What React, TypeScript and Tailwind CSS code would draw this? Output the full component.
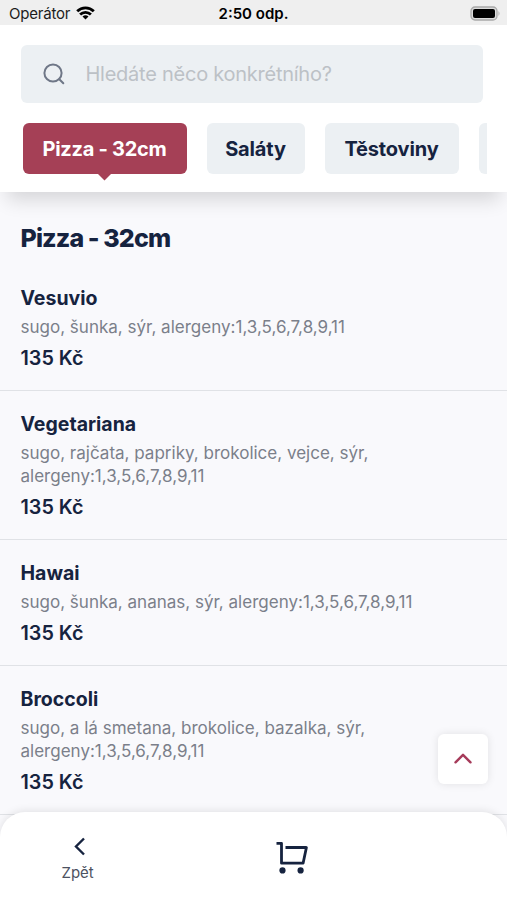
type Dish = { name: string; lines: string[]; price: string };

const dishes: Dish[] = [
  { name: 'Vesuvio', lines: ['sugo, šunka, sýr, alergeny:1,3,5,6,7,8,9,11'], price: '135 Kč' },
  { name: 'Vegetariana', lines: ['sugo, rajčata, papriky, brokolice, vejce, sýr,', 'alergeny:1,3,5,6,7,8,9,11'], price: '135 Kč' },
  { name: 'Hawai', lines: ['sugo, šunka, ananas, sýr, alergeny:1,3,5,6,7,8,9,11'], price: '135 Kč' },
  { name: 'Broccoli', lines: ['sugo, a lá smetana, brokolice, bazalka, sýr,', 'alergeny:1,3,5,6,7,8,9,11'], price: '135 Kč' },
];

function StatusBar() {
  return (
    <div className="grid h-[25px] grid-cols-3 items-center bg-[#efefef] pt-[3px] text-[15px] text-[#1c1c1c]">
      <div className="flex items-center gap-[6px] pl-[9px]">
        <span className="tracking-[-0.2px]">Operátor</span>
        <svg width="19" height="14" viewBox="0 0 19 14" className="mb-[3px]" fill="none" stroke="#000" strokeWidth="2.8">
          <path d="M1.2 5.2a11.8 11.8 0 0 1 16.6 0" />
          <path d="M4.1 8.5a7.7 7.7 0 0 1 10.8 0" />
          <path d="M9.5 13.6 6.5 10.6a4.3 4.3 0 0 1 6 0z" fill="#000" stroke="none" />
        </svg>
      </div>
      <span className="text-center font-semibold text-black">2:50 odp.</span>
      <div className="flex justify-end pr-[6px]">
        <svg width="31" height="15" viewBox="0 0 31 15" className="mb-[2px]">
          <rect x="1" y="1" width="26" height="13" rx="4" fill="#dcdcdc" stroke="#a9a9a9" strokeWidth="1.3" />
          <rect x="3" y="3" width="22" height="9" rx="2" fill="#000" />
          <path d="M28.5 5q2 2.5 0 5z" fill="#a9a9a9" />
        </svg>
      </div>
    </div>
  );
}

function DishRow({ dish }: { dish: Dish }) {
  return (
    <li className="border-b border-[#e0e2e6] pt-[19px] pr-5 pb-[18px] pl-[20.5px]">
      <h2 className="text-[19.5px] leading-7 font-bold text-[#16233f]">{dish.name}</h2>
      <p className="mt-[4.3px] text-[17.03px] leading-[23.4px] text-[#7b7f8a]">
        {dish.lines.map((line) => (
          <span key={line} className="block whitespace-nowrap">{line}</span>
        ))}
      </p>
      <p className="mt-1 text-[19.8px] leading-7 font-semibold text-[#16233f]">{dish.price}</p>
    </li>
  );
}

export default function App() {
  return (
    <div className="relative flex h-[900px] w-[507px] flex-col overflow-hidden bg-[#f9f9fc] font-['Inter',sans-serif]">
      <StatusBar />
      <header className="relative h-[167px] shrink-0 bg-white pt-5 shadow-[0_15px_18px_-7px_rgba(0,0,0,0.14)]">
        <label className="ml-[20.5px] flex h-[58px] w-[462px] items-center gap-[20px] rounded-md bg-[#ecf0f3] pl-[21px]">
          <svg width="24" height="24" viewBox="0 0 24 24" fill="none" stroke="#6f7787" strokeWidth="2" strokeLinecap="round">
            <circle cx="11" cy="11" r="8.6" />
            <path d="m17.3 17.3 4 4" />
          </svg>
          <span className="text-[20px] tracking-[-0.25px] text-[#bcc1c6]">Hledáte něco konkrétního?</span>
        </label>
        <nav className="mt-5 mr-5 ml-[22.5px] flex h-[60px] gap-5 overflow-hidden text-[20px] font-bold tracking-[-0.15px] text-[#16233f]">
          <div className="flex w-[164px] shrink-0 flex-col items-center">
            <div className="flex h-[51px] w-full items-center justify-center rounded-md bg-[#a54056] tracking-[-0.28px] text-white">Pizza - 32cm</div>
            <svg width="13" height="7" viewBox="0 0 13 7"><path d="M0 0h13L6.5 6.5z" fill="#a54056" /></svg>
          </div>
          <div className="flex h-[51px] w-[98px] shrink-0 items-center justify-center rounded-md bg-[#ecf0f3]">Saláty</div>
          <div className="flex h-[51px] w-[134px] shrink-0 items-center justify-center rounded-md bg-[#ecf0f3]">Těstoviny</div>
          <div className="h-[51px] w-[100px] shrink-0 rounded-md bg-[#ecf0f3]" />
        </nav>
      </header>
      <main className="pt-[30px]">
        <h1 className="pl-[20.5px] text-[25px] leading-8 font-extrabold tracking-[-0.88px] text-[#16233f]">Pizza - 32cm</h1>
        <ul className="mt-[11px]">
          {dishes.map((dish) => <DishRow key={dish.name} dish={dish} />)}
        </ul>
      </main>
      <button className="absolute top-[733.5px] left-[438px] flex size-[50px] items-center justify-center rounded-md bg-white shadow-[0_0_8px_rgba(0,0,0,0.1)]">
        <svg width="18" height="11" viewBox="0 0 18 11" fill="none" stroke="#a63b5a" strokeWidth="2.4" strokeLinecap="round" strokeLinejoin="round">
          <path d="m1.5 9.3 7.5-7.5 7.5 7.5" />
        </svg>
      </button>
      <footer className="absolute inset-x-0 bottom-0 h-[88px] rounded-t-[25px] bg-white shadow-[0_-1px_9px_rgba(0,0,0,0.1)]">
        <div className="flex items-start">
          <div className="ml-[61px] flex w-[33px] flex-col items-center pt-[25px]">
            <svg width="13" height="19" viewBox="0 0 13 19" className="ml-1" fill="none" stroke="#16233f" strokeWidth="2.4">
              <path d="M11 1.5 3 9.5l8 8" />
            </svg>
            <span className="mt-[5px] text-[15px] leading-[24px] tracking-[-0.1px] text-[#4c5261]">Zpět</span>
          </div>
          <svg width="34" height="34" viewBox="0 0 34 34" className="mt-[29px] ml-[181px]" fill="none" stroke="#16233f" strokeWidth="2.8">
            <path d="M1.5 2.3h5v19.9h21.6l3.3-15.7H10.5" strokeLinejoin="round" />
            <circle cx="7.5" cy="29.4" r="3.1" fill="#16233f" stroke="none" />
            <circle cx="25.6" cy="29.4" r="3.1" fill="#16233f" stroke="none" />
          </svg>
        </div>
      </footer>
    </div>
  );
}
